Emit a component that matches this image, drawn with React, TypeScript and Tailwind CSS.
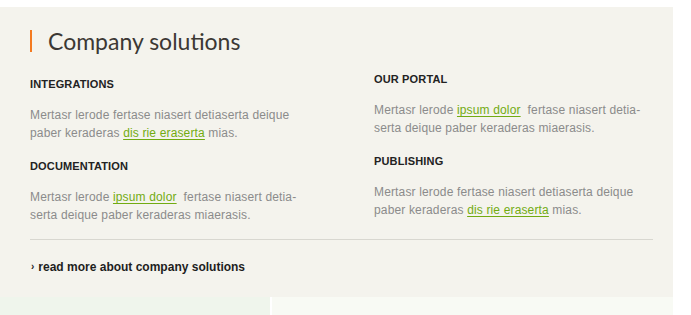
const linkCls = "text-[#72ab12] underline underline-offset-2 decoration-[#72ab12]";

function Section({ title, children, className = "" }: { title: string; children: React.ReactNode; className?: string }) {
  return (
    <div className={className}>
      <h3 className="text-[11px] leading-[14px] font-bold tracking-[0.15px] text-[#222222] uppercase">{title}</h3>
      <p className="mt-[15px] text-[12px] leading-[18px] tracking-[0.15px] text-[#8b8b8b]">{children}</p>
    </div>
  );
}

export default function App() {
  return (
    <div className="w-[691px] h-[315px] bg-white pt-[7px] font-['Liberation_Sans',Arial,sans-serif]">
      <div className="w-[673px] h-[290px] bg-[#f4f3ed] pl-[30px] pr-[20px] pt-[23px]">
        <h2 className="border-l-2 border-[#f47a20] pl-[16px] h-[22px] leading-[22px] text-[23px] text-[#3c3834] font-['Lato',sans-serif]">
          Company solutions
        </h2>

        <div className="flex">
          <div className="w-[344px] pt-[25px]">
            <Section title="Integrations">
              Mertasr lerode fertase niasert detiaserta deique
              <br />
              paber keraderas <a className={linkCls}>dis rie eraserta</a> mias.
            </Section>
            <Section title="Documentation" className="mt-[17px]">
              Mertasr lerode <a className={linkCls}>ipsum dolor</a>{"\u00a0 "}fertase niasert detia-
              <br />
              serta deique paber keraderas miaerasis.
            </Section>
          </div>
          <div className="pt-[20px]">
            <Section title="Our Portal">
              Mertasr lerode <a className={linkCls}>ipsum dolor</a>{"\u00a0 "}fertase niasert detia-
              <br />
              serta deique paber keraderas miaerasis.
            </Section>
            <Section title="Publishing" className="mt-[17px]">
              Mertasr lerode fertase niasert detiaserta deique
              <br />
              paber keraderas <a className={linkCls}>dis rie eraserta</a> mias.
            </Section>
          </div>
        </div>

        <div className="mt-[15px] border-t border-[#d8d7d0]" />

        <a className="mt-[18px] flex items-center text-[12px] leading-[18px] font-bold text-[#1e1e1e]">
          <span className="text-[10px] ml-[1px] mr-[4px]">›</span>
          read more about company solutions
        </a>
      </div>
      <div className="flex h-[18px]">
        <div className="w-[270px] bg-[#eff5ec]" />
        <div className="w-[401px] ml-[2px] bg-[#f8faf4]" />
      </div>
    </div>
  );
}
